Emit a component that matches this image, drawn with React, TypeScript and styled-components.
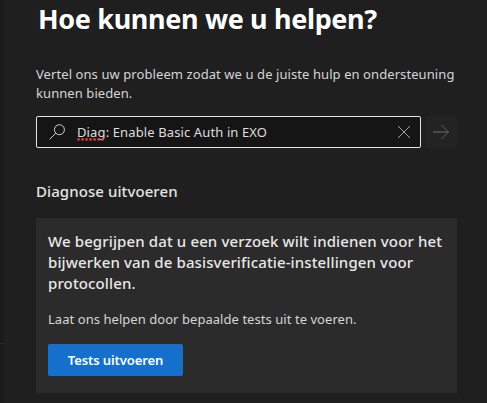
import React from "react";
import styled, { createGlobalStyle } from "styled-components";

const GlobalStyle = createGlobalStyle`
  * { box-sizing: border-box; }
  body {
    margin: 0;
    background: #1f1f1f;
    overflow: hidden;
    font-family: "Noto Sans", "Open Sans", sans-serif;
  }
`;

const Page = styled.div`
  display: flex;
  width: 487px;
  height: 403px;
  overflow: hidden;
  background: #1f1f1f;
`;

const Rail = styled.aside`
  flex: none;
  width: 4px;
  background: #1a1a1a;
  padding-top: 343px;
`;

const RailDivider = styled.div`
  height: 1px;
  background: #2b2b2b;
`;

const Panel = styled.main`
  flex: none;
  width: 453px;
  padding-left: 32px;
`;

const Heading = styled.h1`
  margin: 0 0 0 2px;
  padding-top: 1px;
  height: 65px;
  font-size: 27px;
  line-height: 36px;
  font-weight: 700;
  letter-spacing: -0.35px;
  white-space: nowrap;
  color: #ffffff;
`;

const Text = styled.p<{ $spacing: string }>`
  margin: 0;
  font-size: 13px;
  line-height: 19px;
  letter-spacing: ${(p) => p.$spacing};
  white-space: nowrap;
  color: #d6d6d6;
`;

const SearchRow = styled.div`
  display: flex;
  gap: 4px;
  margin-top: 13px;
`;

const SearchBox = styled.div`
  display: flex;
  align-items: center;
  width: 385px;
  height: 32px;
  padding: 0 9px 0 12px;
  border: 1px solid #e6e6e6;
  border-radius: 2px;
  background: #151515;
`;

const Query = styled.div`
  flex: 1;
  margin-left: 12px;
  font-size: 13px;
  line-height: 20px;
  letter-spacing: 0.12px;
  white-space: nowrap;
  color: #dedede;
`;

const Misspelled = styled.span`
  position: relative;
`;

const SpellDots = styled.svg`
  position: absolute;
  left: 0;
  bottom: 0;
`;

const GoButton = styled.button`
  display: flex;
  align-items: center;
  justify-content: center;
  width: 32px;
  height: 32px;
  padding: 0;
  border: 0;
  border-radius: 2px;
  background: #232323;
`;

const SectionTitle = styled.h2`
  margin: 33px 0 0;
  font-size: 15px;
  line-height: 20px;
  font-weight: 500;
  letter-spacing: 0.08px;
  white-space: nowrap;
  color: #e4e4e4;
`;

const Card = styled.section`
  margin-top: 17px;
  height: 175px;
  padding: 13px 12px 0;
  background: #2b2b2b;
`;

const CardTitle = styled.h3`
  margin: 0 0 16px;
  font-size: 15px;
  line-height: 21px;
  font-weight: 500;
  letter-spacing: 0.125px;
  white-space: nowrap;
  color: #e8e8e8;
`;

const PrimaryButton = styled.button`
  display: block;
  width: 135px;
  height: 32px;
  margin-top: 15px;
  padding: 0;
  border: 0;
  border-radius: 2px;
  background: #146fcd;
  color: #ffffff;
  font-family: inherit;
  font-size: 13px;
  line-height: 32px;
  font-weight: 600;
  letter-spacing: -0.1px;
  white-space: nowrap;
`;

const SearchIcon = () => (
  <svg width="16" height="16" viewBox="0 0 16 16" fill="none" stroke="#d2d2d2">
    <circle cx="10.4" cy="5.7" r="5" />
    <path d="M6.8 9.2 L0.6 15.4" />
  </svg>
);

const ClearIcon = () => (
  <svg width="14" height="14" viewBox="0 0 14 14" fill="none" stroke="#a0a0a0">
    <path d="M1 1 L13 13 M13 1 L1 13" />
  </svg>
);

const ArrowIcon = () => (
  <svg width="16" height="16" viewBox="0 0 16 16" fill="none" stroke="#5c5c5c">
    <path d="M0 8 H15.4" strokeWidth="1.4" />
    <path d="M8.5 1 L15.5 8 L8.5 15" />
  </svg>
);

export default function App() {
  return (
    <>
      <GlobalStyle />
      <Page>
        <Rail>
          <RailDivider />
        </Rail>
        <Panel>
          <Heading>Hoe kunnen we u helpen?</Heading>
          <Text $spacing="0.08px">
            Vertel ons uw probleem zodat we u de juiste hulp en ondersteuning
            <br />
            kunnen bieden.
          </Text>
          <SearchRow>
            <SearchBox>
              <SearchIcon />
              <Query>
                <Misspelled>
                  Diag
                  <SpellDots width="28" height="3" viewBox="0 0 28 3">
                    <path
                      d="M1.5 1.5 H27"
                      stroke="#d93a33"
                      strokeWidth="2.8"
                      strokeLinecap="round"
                      strokeDasharray="0.01 4"
                    />
                  </SpellDots>
                </Misspelled>
                : Enable Basic Auth in EXO
              </Query>
              <ClearIcon />
            </SearchBox>
            <GoButton aria-label="Zoeken">
              <ArrowIcon />
            </GoButton>
          </SearchRow>
          <SectionTitle>Diagnose uitvoeren</SectionTitle>
          <Card>
            <CardTitle>
              We begrijpen dat u een verzoek wilt indienen voor het
              <br />
              bijwerken van de basisverificatie-instellingen voor
              <br />
              protocollen.
            </CardTitle>
            <Text $spacing="0.05px">
              Laat ons helpen door bepaalde tests uit te voeren.
            </Text>
            <PrimaryButton>Tests uitvoeren</PrimaryButton>
          </Card>
        </Panel>
      </Page>
    </>
  );
}
